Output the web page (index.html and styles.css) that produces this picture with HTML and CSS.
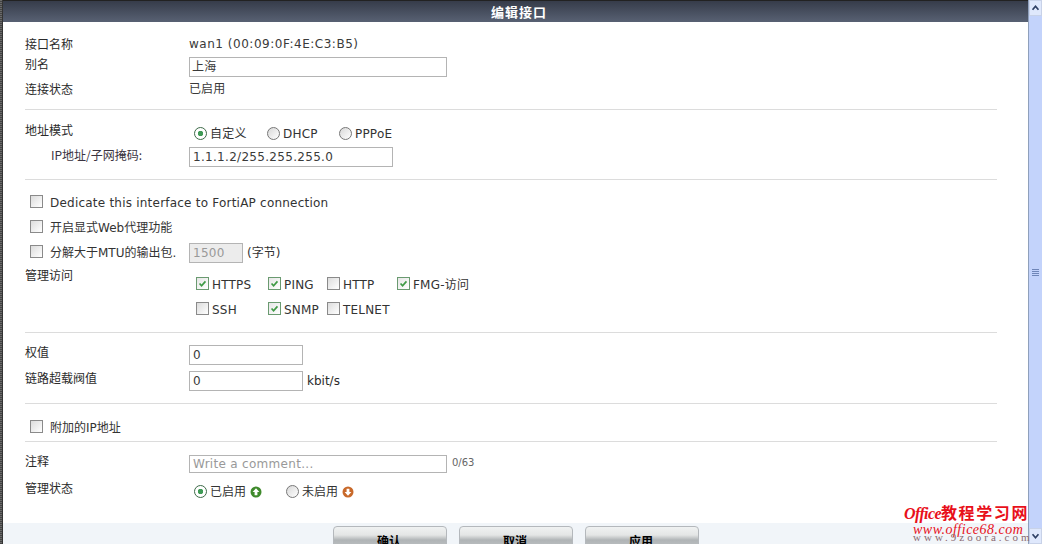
FILE: index.html
```html
<!DOCTYPE html>
<html lang="zh-CN">
<head>
<meta charset="utf-8">
<title>编辑接口</title>
<link rel="stylesheet" href="styles.css">
</head>
<body>
<div class="window">
  <div class="frame-edge"></div>
  <main class="dialog">
    <header class="titlebar">编辑接口</header>
    <form class="form">
      <div class="row h-name"><span class="label">接口名称</span><span class="value">wan1 (00:09:0F:4E:C3:B5)</span></div>
      <div class="row h-alias"><span class="label">别名</span><div class="field wide">上海</div></div>
      <div class="row h-state"><span class="label">连接状态</span><span class="value">已启用</span></div>
      <hr class="rule r1">
      <div class="row h-mode"><span class="label">地址模式</span>
        <div class="radios">
          <span class="opt o-custom"><span class="radio on"></span>自定义</span>
          <span class="opt o-dhcp"><span class="radio"></span>DHCP</span>
          <span class="opt"><span class="radio"></span>PPPoE</span>
        </div>
      </div>
      <div class="row h-ip"><span class="label indent">IP地址/子网掩码:</span><div class="field ip">1.1.1.2/255.255.255.0</div></div>
      <hr class="rule r2">
      <div class="check-row cr1"><span class="box"></span><span class="dedicate">Dedicate this interface to FortiAP connection</span></div>
      <div class="check-row cr2"><span class="box"></span><span>开启显式Web代理功能</span></div>
      <div class="check-row cr3"><span class="box"></span><span class="frag">分解大于MTU的输出包.</span><div class="field mtu">1500</div><span class="unit">(字节)</span></div>
      <div class="row h-access"><span class="label">管理访问</span>
        <div class="access">
          <span class="chk"><span class="box on"><svg viewBox="0 0 13 13"><path d="M3 6.5l2.4 2.6L10 4" fill="none" stroke="#3f9a45" stroke-width="2"/></svg></span>HTTPS</span>
          <span class="chk"><span class="box on"><svg viewBox="0 0 13 13"><path d="M3 6.5l2.4 2.6L10 4" fill="none" stroke="#3f9a45" stroke-width="2"/></svg></span>PING</span>
          <span class="chk"><span class="box"></span>HTTP</span>
          <span class="chk"><span class="box on"><svg viewBox="0 0 13 13"><path d="M3 6.5l2.4 2.6L10 4" fill="none" stroke="#3f9a45" stroke-width="2"/></svg></span>FMG-访问</span>
          <span class="chk"><span class="box"></span>SSH</span>
          <span class="chk"><span class="box on"><svg viewBox="0 0 13 13"><path d="M3 6.5l2.4 2.6L10 4" fill="none" stroke="#3f9a45" stroke-width="2"/></svg></span>SNMP</span>
          <span class="chk"><span class="box"></span>TELNET</span>
        </div>
      </div>
      <hr class="rule r3">
      <div class="row h-weight"><span class="label">权值</span><div class="field num">0</div></div>
      <div class="row h-limit"><span class="label">链路超载阀值</span><div class="inline"><div class="field num">0</div><span class="unit kbit">kbit/s</span></div></div>
      <hr class="rule r4">
      <div class="check-row cr4"><span class="box"></span><span>附加的IP地址</span></div>
      <hr class="rule r5">
      <div class="row h-note"><span class="label">注释</span><div class="inline"><div class="field comment">Write a comment...</div><span class="count">0/63</span></div></div>
      <div class="row h-admin"><span class="label">管理状态</span>
        <div class="radios">
          <span class="opt o-up"><span class="radio on"></span>已启用<svg class="arrow" viewBox="0 0 12 12"><circle cx="6" cy="6" r="5.5" fill="#3f8a2c"/><path d="M6 2.2L9.4 6H7.4V9.2H4.6V6H2.6z" fill="#fff"/></svg></span>
          <span class="opt"><span class="radio"></span>未启用<svg class="arrow" viewBox="0 0 12 12"><circle cx="6" cy="6" r="5.5" fill="#c8692a"/><path d="M6 9.8L9.4 6H7.4V2.8H4.6V6H2.6z" fill="#fff"/></svg></span>
        </div>
      </div>
    </form>
    <footer class="footer">
      <button class="btn" type="button">确认</button>
      <button class="btn" type="button">取消</button>
      <button class="btn" type="button">应用</button>
    </footer>
  </main>
  <aside class="scrollbar">
    <div class="sb-btn"><svg viewBox="0 0 13 14"><path d="M3 9l3.5-4L10 9" fill="none" stroke="#2d3f63" stroke-width="2"/></svg></div>
    <div class="sb-track"><div class="grip"><i></i><i></i><i></i><i></i></div></div>
    <div class="sb-btn"><svg viewBox="0 0 13 14"><path d="M3 5l3.5 4L10 5" fill="none" stroke="#2d3f63" stroke-width="2"/></svg></div>
  </aside>
</div>
<div class="watermark">
  <div class="wm1"><em>Office</em>教程学习网</div>
  <div class="wm2">www.office68.com</div>
  <div class="wm3">www.9zoora.com</div>
</div>
</body>
</html>
```
FILE: styles.css
```css
* { box-sizing: border-box; }
html, body { margin: 0; height: 544px; overflow: hidden; background: #fff; }
body { font: 12px/16px "Noto Sans CJK SC", sans-serif; color: #2b2b2b; position: relative; }
.window { display: flex; width: 1042px; height: 544px; overflow: hidden; }
.frame-edge { width: 3px; background: repeating-linear-gradient(#6a6a6a 0 1px, #444 1px 2px); border-right: 1px solid #333; }
.dialog { flex: 1; min-width: 0; display: flex; flex-direction: column; }
.titlebar { height: 22px; flex: none; padding-left: 7px; text-align: center; font-weight: 700; font-size: 13px; line-height: 22px; letter-spacing: 1px; color: #fff; background: linear-gradient(#363c4a, #586173); border-top: 1px solid #222; }
.form { flex: 1; padding: 12px 30px 0 22px; }
.row { display: grid; grid-template-columns: 164px 1fr; }
.label { line-height: 14px; }
.indent { padding-left: 26px; color: #3a3340; line-height: 16px; }
.value { line-height: 20px; letter-spacing: .1px; font-family: "DejaVu Sans", "Noto Sans CJK SC", sans-serif; color: #3a3a3a; }
.h-name { height: 20px; }
.h-name .label { line-height: 19px; }
.h-name .value { letter-spacing: .52px; }
.h-alias { height: 26px; }
.h-alias .label { line-height: 20px; }
.h-alias .field { margin-top: 3px; padding-left: 2px; }
.h-state { height: 20px; }
.h-state .label, .h-state .value { line-height: 18px; }
.rule { border: 0; height: 1px; background: #dcdcdc; margin: 0; width: 972px; }
.r1 { margin-top: 9px; }
.field { height: 20px; padding-left: 3px; border: 1px solid #b4b4b4; background: #fff; font-size: 12px; line-height: 18px; letter-spacing: .3px; font-family: "DejaVu Sans", "Noto Sans CJK SC", sans-serif; color: #3a3a3a; }
.wide { width: 258px; }
.h-mode { height: 27px; margin-top: 10px; }
.h-mode .label { line-height: 20px; }
.radios { display: flex; padding-left: 5px; margin-top: 6px; height: 16px; }
.opt { display: inline-flex; align-items: center; gap: 3px; height: 16px; color: #333; font-family: "DejaVu Sans", "Noto Sans CJK SC", sans-serif; font-size: 12px; letter-spacing: .2px; }
.o-custom { width: 73px; }
.o-dhcp { width: 72px; }
.radio { width: 13px; height: 13px; border-radius: 50%; border: 1px solid #777; background: linear-gradient(135deg, #d8d8d8, #fff); flex: none; display: block; margin-top: -2px; }
.radio.on { background: radial-gradient(circle, #3f9a55 0 2.5px, #fff 3px); border-color: #3d6a48; }
.h-ip { height: 32px; }
.ip { width: 204px; }
.r2 { margin-top: 0; }
.check-row { display: flex; align-items: center; padding-left: 5px; color: #333; font-family: "DejaVu Sans", "Noto Sans CJK SC", sans-serif; }
.box { flex: none; width: 13px; height: 13px; border: 1px solid #8a8a8a; background: linear-gradient(135deg, #dcdcdc, #fff); display: block; }
.box svg { display: block; width: 11px; height: 11px; }
.box.on { border-color: #6a9a70; background: linear-gradient(135deg, #e6e6e6, #fff); }
.check-row .box { margin-right: 7px; margin-top: -3px; }
.cr1 { height: 25px; margin-top: 10px; }
.dedicate { font-family: "DejaVu Sans", sans-serif; font-size: 12px; letter-spacing: .22px; }
.cr2 { height: 25px; }
.cr3 { height: 25px; }
.frag { width: 139px; white-space: nowrap; }
.mtu { width: 54px; background: #ececec; color: #999; padding-left: 3px; }
.unit { margin-left: 4px; }
.h-access { height: 67px; }
.h-access .label { line-height: 20px; }
.access { display: grid; grid-template-columns: 72px 59px 70px 80px; grid-auto-rows: 25px; padding: 7px 0 0 7px; font-family: "DejaVu Sans", "Noto Sans CJK SC", sans-serif; font-size: 12px; letter-spacing: .2px; color: #333; }
.chk { display: inline-flex; align-items: center; gap: 3px; white-space: nowrap; }
.chk .box { margin-top: -3px; }
.r3 { margin-top: 0; }
.h-weight { height: 26px; margin-top: 12px; }
.h-limit { height: 32px; }
.num { width: 114px; }
.inline { display: flex; align-items: flex-start; }
.kbit { font-family: "DejaVu Sans", sans-serif; line-height: 20px; }
.r4 { margin-top: 0; }
.cr4 { height: 37px; padding-top: 10px; }
.r5 { margin-top: 0; }
.h-note { height: 24px; margin-top: 13px; }
.h-note .label { line-height: 12px; }
.comment { width: 258px; height: 18px; color: #999; line-height: 17px; }
.count { margin-left: 5px; font-size: 10px; line-height: 16px; font-family: "DejaVu Sans", sans-serif; color: #666; }
.h-admin { height: 30px; }
.h-admin .label { line-height: 18px; }
.h-admin .radios { margin-top: 5px; }
.h-admin .opt { letter-spacing: 0; }
.o-up { width: 92px; }
.arrow { width: 12px; height: 12px; margin-left: 1px; margin-top: -1px; }
.footer { height: 21px; flex: none; display: flex; gap: 12px; padding: 3px 0 0 330px; background: #f1f5f9; overflow: hidden; }
.btn { flex: none; width: 114px; height: 30px; padding: 0 2px 1px 0; border: 1px solid #b4b8bc; border-radius: 4px 4px 0 0; font: 700 12px/15px "Noto Sans CJK SC", sans-serif; color: #000; display: block; background: linear-gradient(#f0f2f2 0, #e4e6e6 8px, #b0b4b6 13px, #b8bcbe 18px, #e4e6e6 30px); }
.scrollbar { width: 14px; flex: none; display: flex; flex-direction: column; background: #c3d3fb; border-left: 1px solid #8fa0bc; }
.sb-btn { height: 16px; background: #dfe8fc; border: 1px solid #c8d2e8; }
.sb-btn svg { display: block; width: 11px; height: 14px; }
.sb-track { flex: 1; display: flex; align-items: center; justify-content: center; }
.grip { display: flex; flex-direction: column; gap: 1px; }
.grip i { display: block; width: 7px; height: 1px; background: #6f86b8; }
.watermark { position: absolute; left: 904px; top: 505px; width: 138px; color: #e8101a; font-family: "Liberation Serif", "Noto Sans CJK SC", serif; white-space: nowrap; }
.wm1 { font-size: 16px; line-height: 18px; font-weight: 700; letter-spacing: 1.6px; }
.wm1 em { font-size: 16px; font-weight: 700; letter-spacing: -.6px; }
.wm2 { font-size: 14px; line-height: 13px; letter-spacing: .5px; padding-left: 9px; font-style: italic; }
.wm3 { font-size: 11px; line-height: 8px; margin-top: -3px; letter-spacing: 3px; padding-left: 9px; color: #8a6a70; }
```
